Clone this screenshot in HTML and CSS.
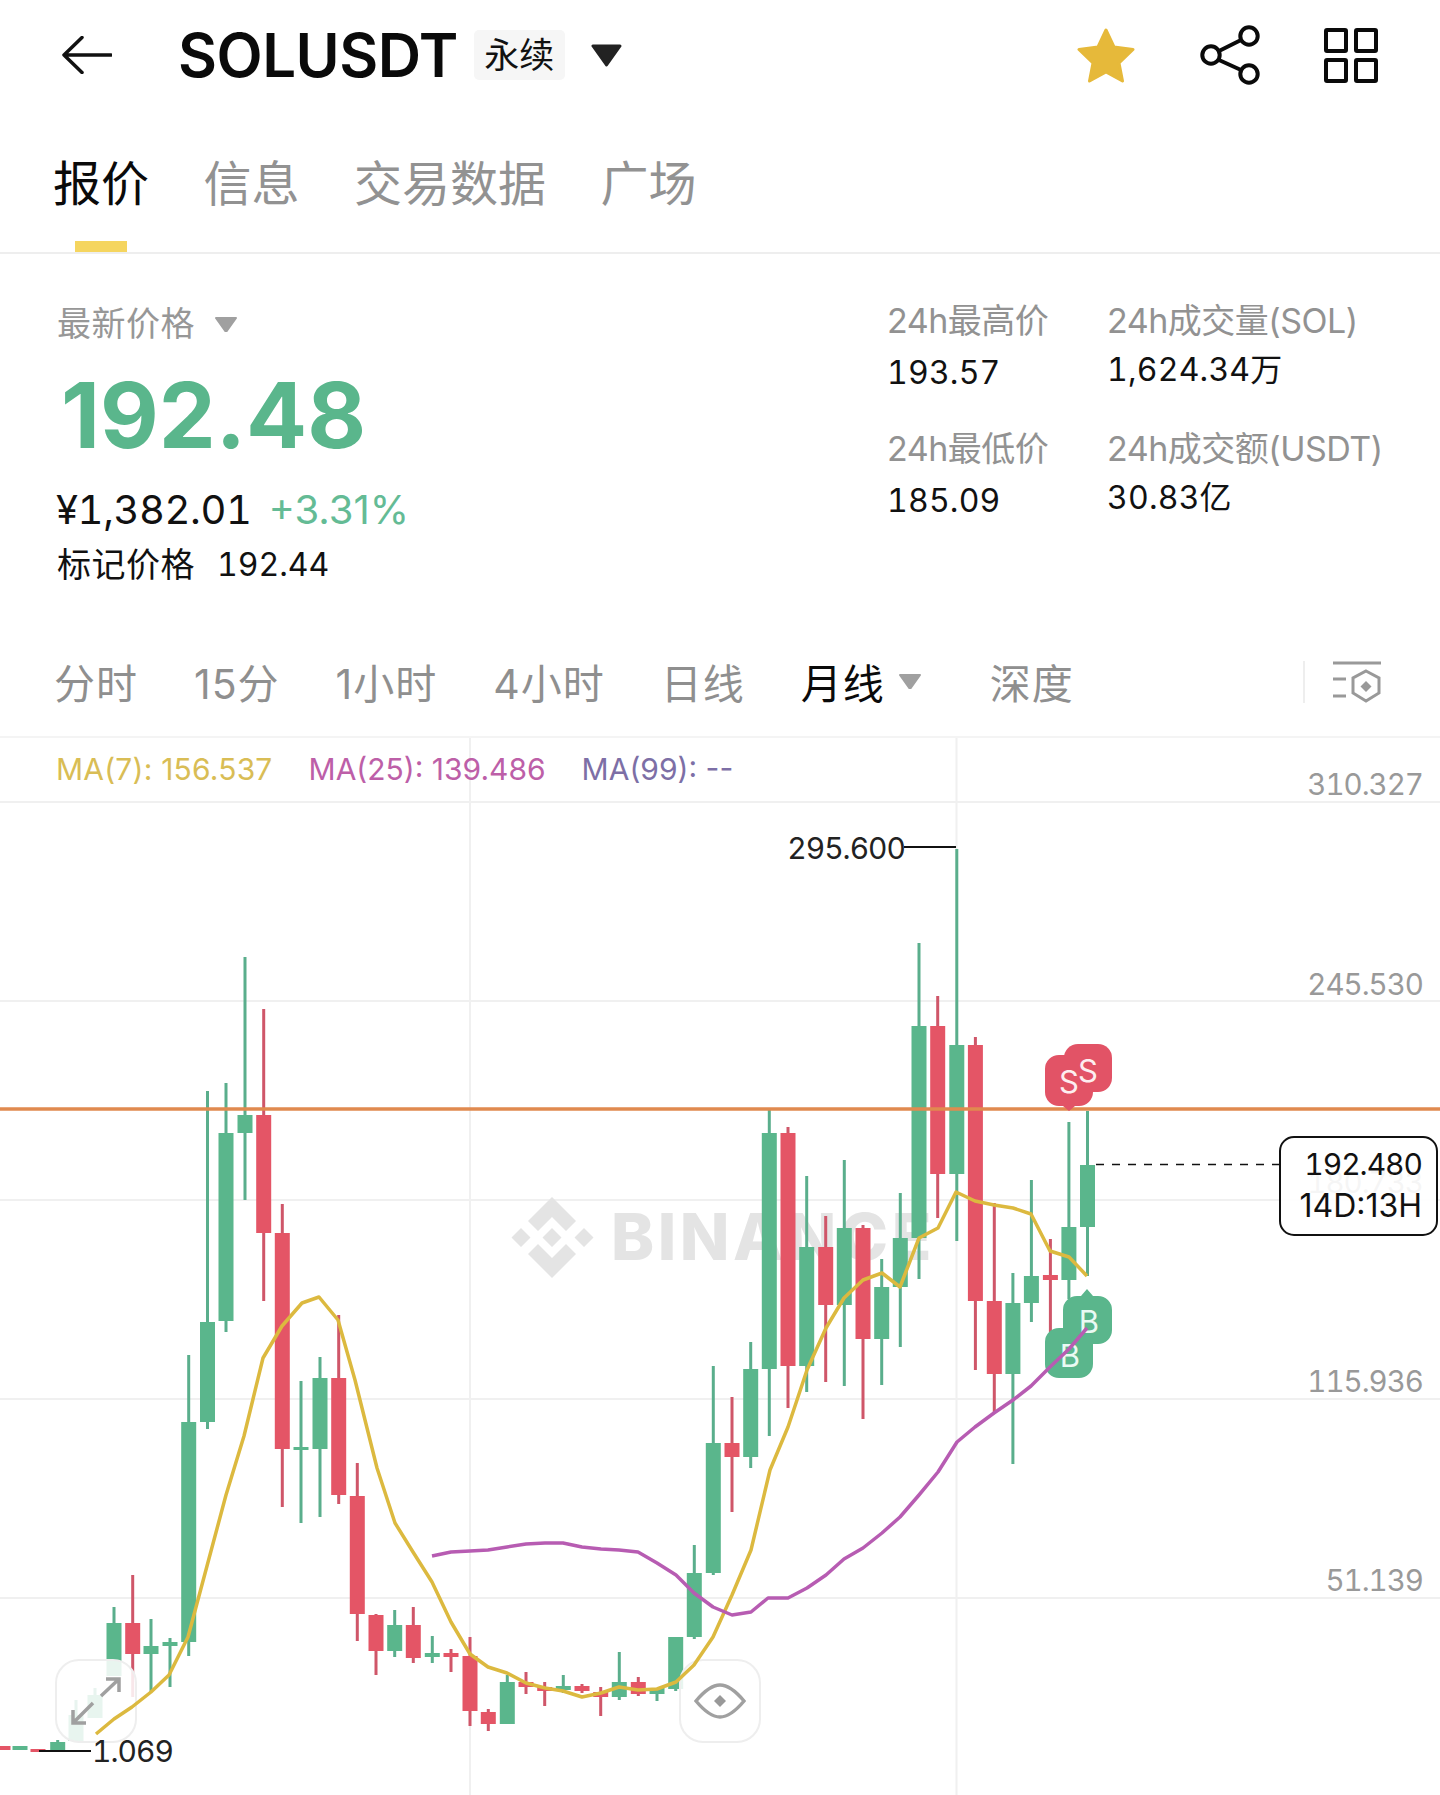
FILE: index.html
```html
<!DOCTYPE html>
<html>
    <head>
        <meta charset="UTF-8"/>
        <meta name="viewport" content="width=device-width, initial-scale=1">
        <link rel="stylesheet" href="styles.css">
    </head>
    <body>
        <div class="Topbar">
            <svg class="Back" viewBox="0 0 50 38"><path d="M49 19H2M20 1.500L2 19l18 17.500"/></svg>
            <h1 class="Symbol">SOLUSDT</h1>
            <span class="Perp">永续</span>
            <svg class="Caret Big" viewBox="0 0 31 23"><path d="M2 2h27L15.500 21z"/></svg>
            <div class="Actions">
                <svg class="Star" viewBox="0 0 60 56"><path d="M30 3l8 17 19 2.500-14 13.500 3.500 18L30 45l-16.500 9L17 36 3 22.500 22 20z"/></svg>
                <svg class="Share" viewBox="0 0 60 60"><circle cx="12" cy="30" r="8.700"/><circle cx="50" cy="11" r="8.700"/><circle cx="50" cy="49" r="8.700"/><path d="M20 26l22-11M20 35l22 10"/></svg>
                <svg class="Apps" viewBox="0 0 56 56"><rect x="2" y="2" width="20" height="21" rx="1"/><rect x="32" y="2" width="20" height="21" rx="1"/><rect x="2" y="32" width="20" height="21" rx="1"/><rect x="32" y="32" width="20" height="21" rx="1"/></svg>
            </div>
        </div>

        <div class="Tabs">
            <span class="Tab Active">报价</span>
            <span class="Tab">信息</span>
            <span class="Tab">交易数据</span>
            <span class="Tab">广场</span>
        </div>

        <div class="Stats">
            <div class="Quote">
                <div class="PriceType">最新价格 <svg class="Caret Small" viewBox="0 0 22 15"><path d="M1 1h20L11 15z"/></svg></div>
                <div class="Last">192.48</div>
                <div class="Change"><span class="Cny">¥1,382.01</span><span class="Pct">+3.31%</span></div>
                <div class="Mark"><span>标记价格</span><span class="Num">192.44</span></div>
            </div>
            <dl class="Daily">
                <div><dt>24h最高价</dt><dd>193.57</dd></div>
                <div><dt>24h成交量(SOL)</dt><dd class="Unit">1,624.34万</dd></div>
                <div><dt>24h最低价</dt><dd>185.09</dd></div>
                <div><dt>24h成交额(USDT)</dt><dd class="Unit">30.83亿</dd></div>
            </dl>
        </div>

        <div class="Periods">
            <span class="Period">分时</span>
            <span class="Period">15分</span>
            <span class="Period">1小时</span>
            <span class="Period">4小时</span>
            <span class="Period">日线</span>
            <span class="Period Active">月线 <svg class="Caret Small" viewBox="0 0 22 15"><path d="M1 1h20L11 15z"/></svg></span>
            <span class="Period">深度</span>
            <span class="Settings">
                <svg viewBox="0 0 50 42"><path d="M1 2h48M1 18h13M1 35h13"/><path d="M34 10l13 7v15l-13 8-13-8V17z"/><path class="Fill" d="M34 20l5.500 5.500L34 31l-5.500-5.500z"/></svg>
            </span>
        </div>

        <div class="Chart">
            <svg class="Layer" viewBox="0 738 1440 1057">
                <path class="Grid" d="M0 802H1440M0 1001H1440M0 1200H1440M0 1399H1440M0 1598H1440M470 738V1795M956.500 738V1795"/>

                <g class="Watermark">
                    <path d="M552 1197l24 24-10 10-14-14-14 14-10-10zM552 1278l24-24-10-10-14 14-14-14-10 10zM552 1228l9.500 9.500-9.500 9.500-9.500-9.500zM521 1228l9.500 9.500-9.500 9.500-9.500-9.500zM584 1228l9.500 9.500-9.500 9.500-9.500-9.500z"/>
                    <text x="611" y="1260">BINANCE</text>
                </g>

                <!-- candles, x step 18.72: wick then body -->
                <g class="Up">
                    <path class="Wick" d="
                        M57.700 1740V1752
                        M76 1700V1741
                        M95 1688V1718
                        M114 1607V1676
                        M151 1619V1692
                        M170 1638V1687
                        M188.700 1355V1656
                        M207.500 1091V1429
                        M226 1083V1332
                        M245 957V1200
                        M301 1381V1523
                        M320 1357V1517
                        M394.700 1610V1657
                        M432.300 1636V1663
                        M507.300 1675V1724
                        M563.300 1675V1693
                        M619.300 1652V1700
                        M657 1688V1701
                        M675.700 1637V1691
                        M694.300 1545V1639
                        M713.300 1366V1575
                        M750.700 1342V1468
                        M769.300 1109V1436
                        M806.700 1176V1392
                        M844.300 1160V1386
                        M881.700 1259V1385
                        M900.300 1193V1347
                        M919 943V1279
                        M956.800 849V1241
                        M1012.900 1273V1464
                        M1031.400 1180V1322
                        M1068.900 1122V1299
                        M1087.500 1111V1276"/>
                    <path class="Body" d="
                        M20 1746V1750
                        M57.700 1742V1752
                        M76 1715V1741
                        M95 1695V1718
                        M114 1623V1676
                        M151 1646V1654
                        M170 1642V1646
                        M188.700 1422V1642
                        M207.500 1322V1422
                        M226 1133V1321
                        M245 1115V1133
                        M301 1447V1450
                        M320 1378V1449
                        M394.700 1625V1651
                        M432.300 1653V1657
                        M507.300 1682V1724
                        M563.300 1686V1690
                        M619.300 1682V1697
                        M657 1688V1694
                        M675.700 1637V1689
                        M694.300 1573V1637
                        M713.300 1443V1573
                        M750.700 1369V1457
                        M769.300 1133V1369
                        M806.700 1247V1366
                        M844.300 1228V1305
                        M881.700 1287V1339
                        M900.300 1238V1287
                        M919 1026V1238
                        M956.800 1045V1174
                        M1012.900 1303V1374
                        M1031.400 1276V1303
                        M1068.900 1227V1280
                        M1087.500 1165V1227"/>
                </g>
                <g class="Down">
                    <path class="Wick" d="
                        M132.700 1575V1697
                        M263.700 1009V1301
                        M282.300 1204V1507
                        M338.700 1315V1504
                        M357.300 1463V1641
                        M376 1614V1675
                        M413.300 1607V1663
                        M451 1649V1672
                        M470 1637V1726
                        M488.300 1709V1731
                        M526 1672V1694
                        M544.700 1682V1706
                        M582 1684V1693
                        M600.700 1687V1716
                        M638.300 1677V1696
                        M732 1397V1512
                        M788 1127V1408
                        M825.700 1216V1382
                        M863 1225V1419
                        M937.700 996V1218
                        M975.400 1037V1370
                        M994.300 1203V1413
                        M1050.400 1239V1332"/>
                    <path class="Body" d="
                        M3 1746V1750
                        M38 1749V1752
                        M132.700 1623V1654
                        M263.700 1115V1233
                        M282.300 1233V1449
                        M338.700 1378V1495
                        M357.300 1496V1614
                        M376 1615V1651
                        M413.300 1625V1658
                        M451 1653V1657
                        M470 1656V1711
                        M488.300 1712V1724
                        M526 1682V1687
                        M544.700 1687V1691
                        M582 1686V1691
                        M600.700 1692V1697
                        M638.300 1682V1694
                        M732 1443V1457
                        M788 1133V1366
                        M825.700 1247V1305
                        M863 1228V1339
                        M937.700 1026V1174
                        M975.400 1045V1301
                        M994.300 1301V1374
                        M1050.400 1275V1280"/>
                </g>

                <path class="Alert" d="M0 1109H1440"/>
                <text class="Axis" x="1423" y="795">310.327</text>
                <text class="Axis" x="1423" y="995">245.530</text>
                <text class="Axis" x="1423" y="1193">180.733</text>
                <text class="Axis" x="1423" y="1392">115.936</text>
                <text class="Axis" x="1423" y="1591">51.139</text>
            </svg>

            <div class="Legend">
                <span class="Ma7">MA(7): 156.537</span>
                <span class="Ma25">MA(25): 139.486</span>
                <span class="Ma99">MA(99): --</span>
            </div>

            <div class="Floating Expand">
                <svg viewBox="0 0 50 48"><path d="M2 46L22 26M30 19L48 2M35 2h13v13M2 33v13h13"/></svg>
            </div>
            <div class="Floating Eye">
                <svg viewBox="0 0 52 36"><path d="M2 18C12 6 19 2 26 2s14 4 24 16c-10 12-17 16-24 16S12 30 2 18z"/><path class="Fill" d="M26 12l6 6-6 6-6-6z"/></svg>
            </div>

            <svg class="Layer" viewBox="0 738 1440 1057">
                <g class="Sell">
                    <path d="M1059 1055h20a14 14 0 0 1 14 14v23a14 14 0 0 1-14 14h-4l-6 5-6-5h-4a14 14 0 0 1-14-14v-23a14 14 0 0 1 14-14z"/>
                    <rect x="1064" y="1044" width="48" height="48" rx="14"/>
                    <text x="1069" y="1093">S</text>
                    <text x="1088" y="1082">S</text>
                </g>
                <g class="Buy">
                    <path d="M1077 1296h4l6-7 6 7h5a14 14 0 0 1 14 14v20a14 14 0 0 1-14 14h-21a14 14 0 0 1-14-14v-20a14 14 0 0 1 14-14z"/>
                    <rect x="1045" y="1328" width="48" height="50" rx="14"/>
                    <text x="1089" y="1333">B</text>
                    <text x="1070" y="1367">B</text>
                </g>

                <polyline class="Ma Yellow" points="96,1734 114,1719 132,1707 151,1692 169,1675 188,1637 207,1566 226,1495 244,1436 263,1358 282,1326 302,1303 319,1297 338,1320 355,1380 377,1468 395,1523 413,1552 432,1582 451,1622 470,1654 488,1667 507,1673 526,1683 545,1688 563,1691 582,1697 601,1693 619,1687 638,1690 657,1689 676,1682 694,1665 713,1637 732,1595 751,1550 770,1470 788,1427 807,1370 826,1328 844,1298 863,1280 882,1273 900,1287 919,1238 938,1228 956,1192 975,1201 994,1205 1013,1208 1031,1214 1050,1251 1069,1257 1087,1276"/>
                <polyline class="Ma Purple" points="432,1556 451,1552 470,1551 488,1550 507,1547 526,1544 545,1543 563,1543 582,1547 601,1549 619,1550 638,1552 657,1563 676,1575 694,1593 713,1607 732,1615 751,1612 768,1598 788,1598 807,1588 826,1575 844,1559 863,1548 882,1533 900,1517 919,1495 938,1472 957,1442 975,1427 994,1413 1013,1400 1031,1386 1050,1367 1069,1349 1087,1328"/>

                <path class="Leader" d="M904 847H956M39 1751H91"/>
                <text class="Extreme" x="905" y="859">295.600</text>
                <text class="Extreme Start" x="92" y="1762">1.069</text>
                <path class="Last" d="M1096 1164.500H1280"/>
            </svg>

            <div class="PriceTag">
                <span class="Now">192.480</span>
                <span>14D:13H</span>
            </div>
        </div>
    </body>
</html>
```

FILE: styles.css
```css
html,body
{
    margin:0;
    padding:0;
    background:#fff;
}
body
{
    width:1440px;
    height:1795px;
    overflow:hidden;
    font-family:Inter,"Noto Sans CJK SC",sans-serif;
    color:#111;
}
svg
{
    display:block;
}
.Caret path
{
    fill:#a0a0a0;
    stroke:#a0a0a0;
    stroke-width:2;
    stroke-linejoin:round;
}
.Caret.Small
{
    display:inline-block;
    width:22px;
    height:15px;
}
.Fill
{
    fill:#999;
    stroke:none;
}

/* top bar */
.Topbar
{
    display:flex;
    align-items:center;
    height:110px;
    padding:0 60px 0 62px;
}
.Back
{
    width:50px;
    height:38px;
    margin-right:66px;
    fill:none;
    stroke:#111;
    stroke-width:3.500;
    stroke-linecap:round;
    stroke-linejoin:round;
}
.Symbol
{
    margin:0 16px 0 0;
    font-size:60px;
    font-weight:600;
    letter-spacing:-0.5px;
    color:#0a0a0a;
}
.Perp
{
    display:block;
    width:91px;
    height:50px;
    border-radius:5px;
    background:#f6f6f6;
    font-size:35px;
    line-height:50px;
    text-align:center;
}
.Caret.Big
{
    width:31px;
    height:23px;
    margin:0 0 -1px 26px;
}
.Caret.Big path
{
    fill:#222;
    stroke:#222;
    stroke-width:3;
}
.Actions
{
    display:flex;
    align-items:center;
    margin-left:auto;
}
.Star
{
    width:60px;
    height:56px;
    margin-right:62px;
    fill:#e6b93a;
    stroke:#e6b93a;
    stroke-width:3;
    stroke-linejoin:round;
}
.Share
{
    width:62px;
    height:60px;
    margin-right:64px;
    fill:none;
    stroke:#0a0a0a;
    stroke-width:4;
}
.Apps
{
    width:56px;
    height:56px;
    margin-top:2px;
    fill:none;
    stroke:#0a0a0a;
    stroke-width:4;
}

/* tabs */
.Tabs
{
    display:flex;
    gap:54.500px;
    height:142px;
    padding-left:53px;
    border-bottom:2px solid #eee;
}
.Tab
{
    position:relative;
    font-size:48px;
    line-height:148px;
    color:#929292;
}
.Tab.Active
{
    color:#0a0a0a;
}
.Tab.Active::after
{
    content:"";
    position:absolute;
    left:22px;
    bottom:0;
    width:52px;
    height:11px;
    background:#f5d55f;
}

/* price block */
.Stats
{
    display:flex;
    height:374px;
    padding-left:57px;
}
.Quote
{
    width:830px;
}
.PriceType
{
    display:flex;
    align-items:center;
    gap:20px;
    margin-top:45px;
    font-size:34px;
    letter-spacing:0.5px;
    line-height:50px;
    color:#979797;
}
.Last
{
    margin:16px 0 0 4px;
    font-size:90.500px;
    font-weight:700;
    line-height:100px;
    color:#5ab68c;
}
.Change
{
    display:flex;
    gap:17px;
    margin:20px 0 0 -1px;
    font-size:40px;
    line-height:50px;
}
.Cny
{
    font-variant-numeric:tabular-nums;
    letter-spacing:-0.4px;
}
.Pct
{
    color:#64bb95;
}
.Mark
{
    display:flex;
    gap:22px;
    margin-top:7px;
    font-size:34px;
    letter-spacing:0.5px;
    line-height:46px;
}
.Mark .Num
{
    font-size:32px;
    font-variant-numeric:tabular-nums;
    letter-spacing:0;
}
.Daily
{
    display:grid;
    grid-template-columns:220px auto;
    grid-auto-rows:128px;
    margin:45px 0 0;
}
.Daily dt
{
    font-size:34px;
    letter-spacing:-0.5px;
    line-height:44px;
    color:#929292;
}
.Daily dd
{
    margin:8px 0 0;
    font-size:32px;
    font-variant-numeric:tabular-nums;
    letter-spacing:0.2px;
    line-height:44px;
}
.Daily dd.Unit
{
    margin-top:5px;
}

/* period row */
.Periods
{
    display:flex;
    align-items:center;
    gap:56px;
    box-sizing:border-box;
    height:110px;
    padding:0 0 2px 54px;
    border-bottom:2px solid #f4f4f4;
    font-size:41px;
    letter-spacing:1px;
    color:#8f8f8f;
}
.Period.Active
{
    display:flex;
    align-items:center;
    gap:14px;
    margin-right:13px;
    color:#0a0a0a;
}
.Settings
{
    margin:2px 0 0 auto;
    padding:0 58px 0 27px;
    border-left:2px solid #eee;
}
.Settings svg
{
    width:50px;
    height:42px;
    fill:none;
    stroke:#999;
    stroke-width:3;
}

/* chart */
.Chart
{
    position:relative;
    height:1057px;
    overflow:hidden;
}
.Layer
{
    position:absolute;
    left:0;
    top:0;
    width:1440px;
    height:1057px;
}
.Grid
{
    stroke:#f0f0f0;
    stroke-width:2;
    fill:none;
}
.Watermark path
{
    fill:#e4e4e4;
}
.Watermark text
{
    font-size:65px;
    font-weight:800;
    letter-spacing:3.500px;
    fill:#e4e4e4;
}
.Wick
{
    fill:none;
    stroke-width:3;
}
.Body
{
    fill:none;
    stroke-width:15;
}
.Up .Wick
{
    stroke:#5aae8c;
}
.Up .Body
{
    stroke:#5ab68c;
}
.Down .Wick
{
    stroke:#cf5669;
}
.Down .Body
{
    stroke:#e45566;
}
.Alert
{
    stroke:#e08a4f;
    stroke-width:3.500;
}
.Axis
{
    font-size:29.500px;
    font-variant-numeric:tabular-nums;
    letter-spacing:-1px;
    text-anchor:end;
    fill:#999;
}
.Legend
{
    position:absolute;
    left:56px;
    top:11px;
    display:flex;
    gap:36px;
    font-size:30px;
    line-height:40px;
}
.Ma7
{
    color:#d9bd55;
    letter-spacing:0.2px;
}
.Ma25
{
    color:#bd5fa8;
}
.Ma99
{
    color:#7d6fa6;
}
.Floating
{
    position:absolute;
    box-sizing:border-box;
    display:flex;
    align-items:center;
    justify-content:center;
    width:82px;
    height:84px;
    border:2px solid #eee;
    border-radius:24px;
    background:rgba(255,255,255,0.86);
}
.Floating svg
{
    fill:none;
    stroke:#a0a0a0;
    stroke-width:3.500;
}
.Expand
{
    left:55px;
    top:921px;
}
.Expand svg
{
    width:50px;
    height:48px;
}
.Eye
{
    left:679px;
    top:921px;
}
.Eye svg
{
    width:52px;
    height:36px;
}
.Eye .Fill
{
    fill:#999;
    stroke:none;
}
.Sell
{
    fill:#e25366;
}
.Buy
{
    fill:#5ab68c;
}
.Sell text,.Buy text
{
    font-size:31px;
    text-anchor:middle;
    fill:#eafaf3;
}
.Sell text
{
    fill:#fdeef0;
}
.Ma
{
    fill:none;
    stroke-width:3.500;
    stroke-linejoin:round;
}
.Yellow
{
    stroke:#dcb93f;
}
.Purple
{
    stroke:#b75cb2;
}
.Leader
{
    stroke:#111;
    stroke-width:2;
}
.Layer .Last
{
    stroke:#111;
    stroke-width:1.500;
    stroke-dasharray:8 8;
    fill:none;
}
.Extreme
{
    font-size:30px;
    font-variant-numeric:tabular-nums;
    letter-spacing:-1px;
    text-anchor:end;
    fill:#222;
}
.Extreme.Start
{
    text-anchor:start;
}
.PriceTag
{
    position:absolute;
    left:1279px;
    top:398px;
    box-sizing:border-box;
    display:flex;
    flex-direction:column;
    align-items:flex-end;
    width:159px;
    height:100px;
    padding:6px 14px 0 0;
    border:2px solid #111;
    border-radius:15px;
    background:rgba(255,255,255,0.9);
    font-size:32px;
    line-height:41px;
}
.Now
{
    font-size:30px;
    font-variant-numeric:tabular-nums;
    letter-spacing:-1px;
}
```
